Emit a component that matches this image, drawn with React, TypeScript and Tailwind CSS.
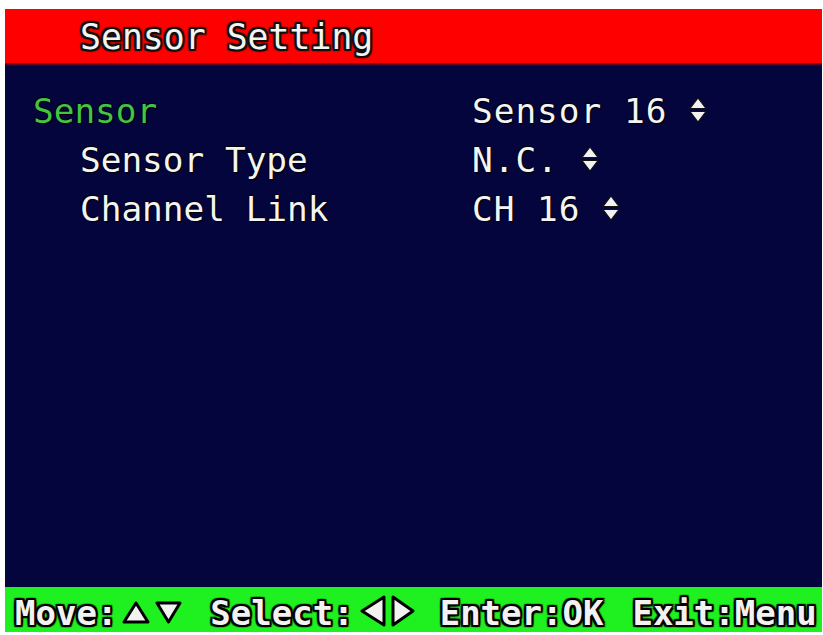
import React from "react";

const UpDown = () => (
  <svg
    width="18"
    height="26"
    viewBox="0 0 18 26"
    className="inline-block align-baseline"
  >
    <polygon points="9,1 17,11.5 1,11.5" fill="#f2f2f2" stroke="#111" strokeWidth="1.2" />
    <polygon points="1,14.5 17,14.5 9,25" fill="#f2f2f2" stroke="#111" strokeWidth="1.2" />
  </svg>
);

const outline2 =
  "[text-shadow:2px_0_1px_#000,-2px_0_1px_#000,0_2px_1px_#000,0_-2px_1px_#000,2px_2px_1px_#000,-2px_-2px_1px_#000,2px_-2px_1px_#000,-2px_2px_1px_#000]";

export default function App() {
  return (
    <div className="w-[823px] h-[635px] bg-white pt-[9px] pl-[5px] overflow-hidden font-['DejaVu_Sans_Mono',monospace]">
      <div className="w-[817px] h-[623px] flex flex-col">
        {/* Header */}
        <div className="h-[54px] bg-[#ff0000] pl-[75px] pt-[11px]">
          <span className="text-[34.8px] leading-none text-[#f4f4f4] [text-shadow:2px_0_1px_#111,-2px_0_1px_#111,0_2px_1px_#111,0_-2px_1px_#111,2px_2px_1px_#111,-2px_-2px_1px_#111,2px_-2px_1px_#111,-2px_2px_1px_#111] whitespace-pre">
            Sensor Setting
          </span>
        </div>
        <div className="h-[3px] bg-[linear-gradient(to_bottom,#a00010,#200030)]" />

        {/* Body */}
        <div className="flex-1 bg-[#05053d] pl-[28px] pt-[21px]">
          <div className="grid grid-cols-[439px_1fr] text-[34.4px] leading-[49px] text-[#f4f4f4] [text-shadow:1px_1px_1px_#000,-1px_-1px_1px_#000]">
            <div className="text-[#44c444] whitespace-pre">Sensor</div>
            <div className="whitespace-pre tracking-[1px]">
              Sensor 16 <UpDown />
            </div>

            <div className="pl-[47px] whitespace-pre">Sensor Type</div>
            <div className="whitespace-pre tracking-[1px]">
              N.C. <UpDown />
            </div>

            <div className="pl-[47px] whitespace-pre">Channel Link</div>
            <div className="whitespace-pre tracking-[1px]">
              CH 16 <UpDown />
            </div>
          </div>
        </div>

        {/* Footer */}
        <div
          className={`h-[45px] bg-[#1ff01f] flex items-end pb-[2px] pl-[10px] text-[34px] font-bold text-[#f2f2f2] ${outline2}`}
        >
          <span className="leading-none whitespace-pre shrink-0">Move:</span>
          <svg width="28" height="23" viewBox="0 0 28 23" className="shrink-0 ml-[5px] mb-[6px]">
            <polygon points="14,2 26,21 2,21" fill="#f2f2f2" stroke="#000" strokeWidth="3" strokeLinejoin="round" />
          </svg>
          <svg width="27" height="23" viewBox="0 0 27 23" className="shrink-0 ml-[5px] mb-[6px]">
            <polygon points="2,2 25,2 13.5,21" fill="#f2f2f2" stroke="#000" strokeWidth="3" strokeLinejoin="round" />
          </svg>
          <span className="leading-none whitespace-pre shrink-0 ml-[28px]">Select:</span>
          <svg width="26" height="32" viewBox="0 0 26 32" className="shrink-0 ml-[6px] mb-[3px]">
            <polygon points="24,2 24,30 2,16" fill="#f2f2f2" stroke="#000" strokeWidth="3" strokeLinejoin="round" />
          </svg>
          <svg width="24" height="32" viewBox="0 0 24 32" className="shrink-0 ml-[5px] mb-[3px]">
            <polygon points="2,2 2,30 22,16" fill="#f2f2f2" stroke="#000" strokeWidth="3" strokeLinejoin="round" />
          </svg>
          <span className="leading-none whitespace-pre shrink-0 ml-[25px]">Enter:OK</span>
          <span className="leading-none whitespace-pre shrink-0 ml-[29px]">Exit:Menu</span>
        </div>
      </div>
    </div>
  );
}
